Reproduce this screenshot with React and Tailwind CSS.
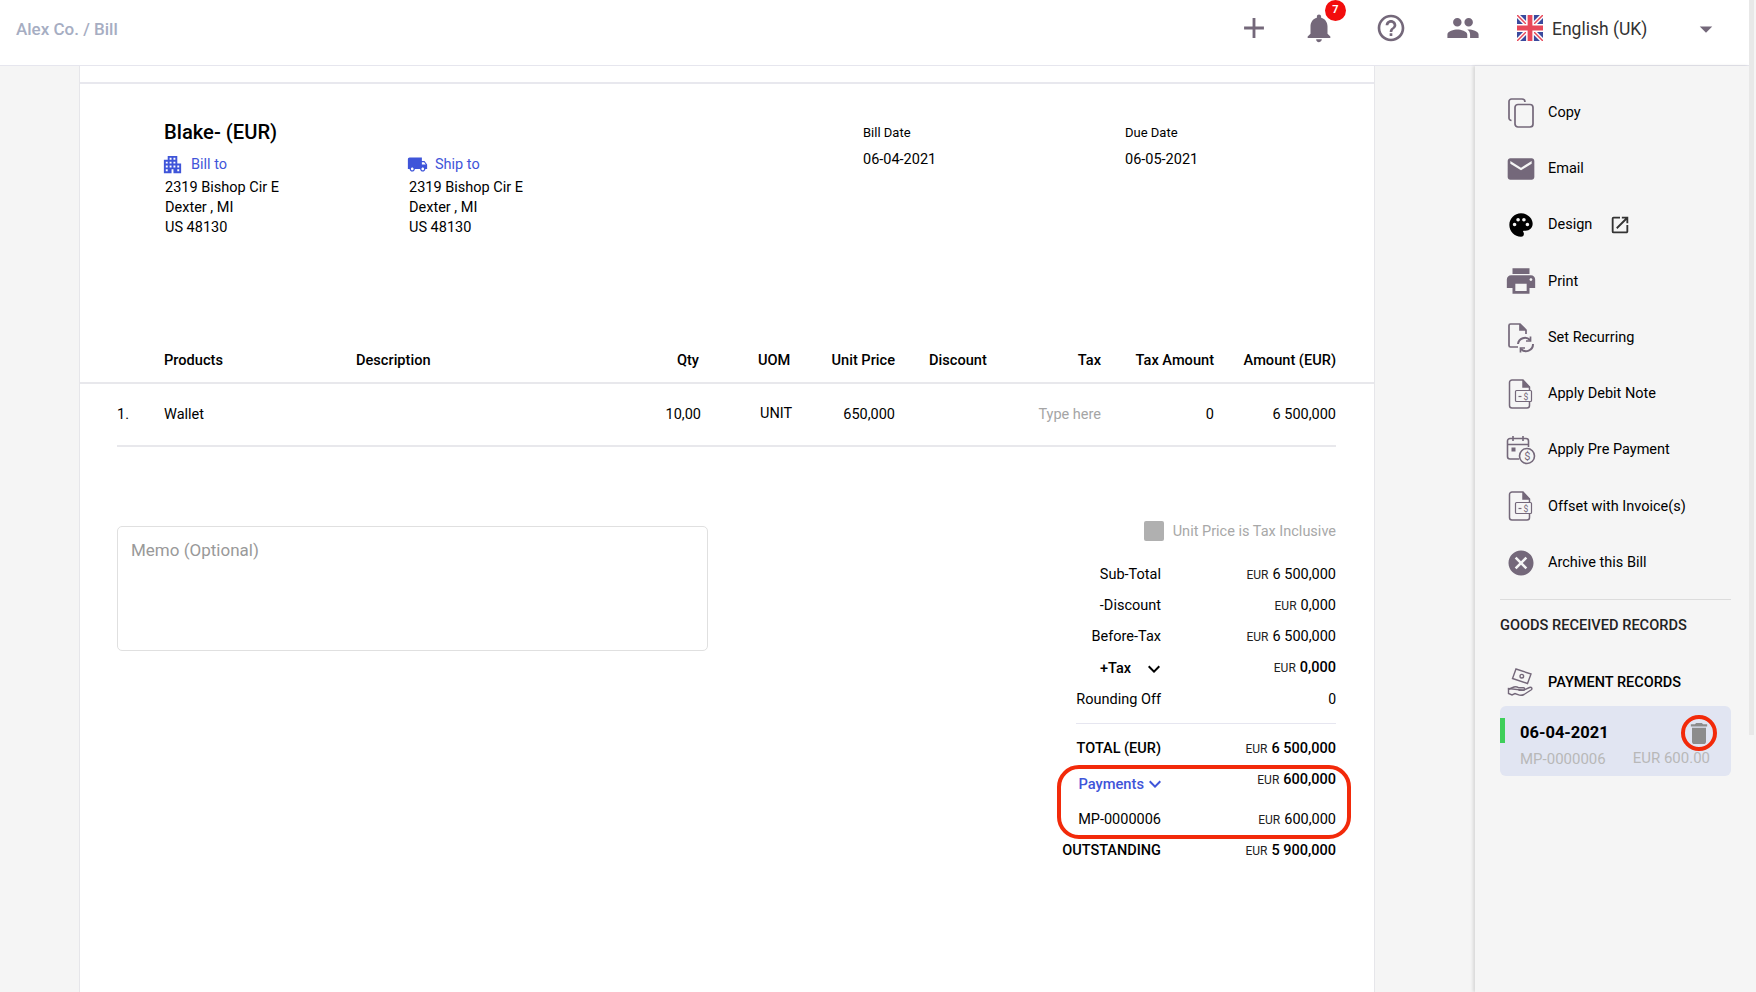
import React from "react";
import { MdAdd, MdNotifications, MdHelpOutline, MdPeople, MdEmail, MdPalette, MdOpenInNew, MdPrint, MdCancel, MdApartment, MdLocalShipping, MdDelete, MdKeyboardArrowDown, MdArrowDropDown } from "react-icons/md";

const ic = "#74687a";

function Flag() {
  return (
    <svg width="26" height="26" viewBox="0 0 60 60" className="shrink-0">
      <rect width="60" height="60" fill="#3b4a9e" />
      <path d="M0 0L60 60M60 0L0 60" stroke="#fff" strokeWidth="10" />
      <path d="M0 0L60 60M60 0L0 60" stroke="#e8485a" strokeWidth="3.5" />
      <path d="M30 0V60M0 30H60" stroke="#fff" strokeWidth="18" />
      <path d="M30 0V60M0 30H60" stroke="#e8485a" strokeWidth="11" />
    </svg>
  );
}

function CopyIc() {
  return (
    <svg width="26" height="30" viewBox="0 0 26 30" fill="none" stroke={ic} strokeWidth="1.7">
      <path d="M3.500 22.500A2.500 2.500 0 0 1 1 20V3.500A2.500 2.500 0 0 1 3.500 1H14a3 3 0 0 1 3 3" />
      <rect x="7" y="6.500" width="18" height="22.500" rx="3" />
    </svg>
  );
}

function Recurring() {
  return (
    <svg width="28" height="30" viewBox="0 0 28 30" fill="none" stroke={ic} strokeWidth="1.7">
      <path d="M11 24H3.500A1.500 1.500 0 0 1 2 22.500V2.500A1.500 1.500 0 0 1 3.500 1H13l6 6v4" />
      <path d="M13 1v6h6" fill={ic} />
      <path d="M11 21a7 7 0 0 1 12-4M26 21a7 7 0 0 1-12 5" strokeWidth="2" />
      <path d="M23.500 13.500V18H19M13.500 29.500V25H18" strokeWidth="1.700" />
    </svg>
  );
}

function NoteIc() {
  return (
    <svg width="26" height="30" viewBox="0 0 26 30" fill="none" stroke={ic} strokeWidth="1.500">
      <path d="M21.500 23V26.500A2.500 2.500 0 0 1 19 29H4A2.500 2.500 0 0 1 1.500 26.500V3.500A2.500 2.500 0 0 1 4 1H15l6.500 7v3" />
      <path d="M15 1v7h6.500" fill={ic} />
      <rect x="7.500" y="11.500" width="16" height="11" rx="1" fill="#f5f5f5" strokeWidth="1.200" />
      <path d="M10.500 17.500h3" strokeWidth="1.200" />
      <text x="15.500" y="20.500" fontSize="8.500" fill={ic} stroke="none" fontFamily="Roboto, sans-serif">$</text>
    </svg>
  );
}

function PrePay() {
  return (
    <svg width="30" height="30" viewBox="0 0 30 30" fill="none" stroke={ic} strokeWidth="1.600">
      <path d="M13 24H4a2.500 2.500 0 0 1-2.500-2.500V6A2.500 2.500 0 0 1 4 3.500h16A2.500 2.500 0 0 1 22.500 6v6" />
      <path d="M1.500 9.500h21M7 1v5M17 1v5" />
      <rect x="5.500" y="12.500" width="4" height="4" fill={ic} stroke="none" />
      <circle cx="21" cy="21" r="7.500" fill="#f5f5f5" />
      <text x="18.200" y="25" fontSize="11" fill={ic} stroke="none" fontFamily="Roboto, sans-serif">$</text>
    </svg>
  );
}

function HandMoney() {
  return (
    <svg width="28" height="30" viewBox="0 0 28 30" fill="none" stroke={ic} strokeWidth="1.400">
      <path d="M9 1l15 5-3.500 9.500-15-5z" fill="#f5f5f5" />
      <circle cx="14.800" cy="8.200" r="1.800" />
      <path d="M1 21.500l6-2.500c2-.8 3.500 0 5 .8h4.500c1.500 0 1.500 2.500 0 2.500H11.500" />
      <path d="M16.500 22.200l6-2.700c2-.8 3.300 1.200 1.500 2.500l-7 4.500c-2 1-4 1-6 .2l-3-1.200-3 1.500-3.500-1.500v-5z" />
    </svg>
  );
}

const actions = [
  [<CopyIc />, "Copy"],
  [<MdEmail size={32} color={ic} />, "Email"],
  [<MdPalette size={28} color="#000" />, "Design", true],
  [<MdPrint size={34} color={ic} />, "Print"],
  [<Recurring />, "Set Recurring"],
  [<NoteIc />, "Apply Debit Note"],
  [<PrePay />, "Apply Pre Payment"],
  [<NoteIc />, "Offset with Invoice(s)"],
  [<MdCancel size={30} color={ic} />, "Archive this Bill"],
];

function Eur({ v, bold }) {
  return (
    <span className="text-black whitespace-nowrap">
      <span className="text-[12px] mr-[4px] text-[#222]">EUR</span>
      <span className={bold ? "font-medium text-[14.5px]" : "text-[14.5px]"}>{v}</span>
    </span>
  );
}

function Row({ label, value, cls = "h-[31.3px]", labelCls = "" }) {
  return (
    <div className={`flex items-center justify-between ${cls}`}>
      <div className={`w-[99px] text-right text-[14.5px] whitespace-nowrap flex justify-end ${labelCls}`}>{label}</div>
      <div>{value}</div>
    </div>
  );
}

const gridCols = "grid grid-cols-[47px_192px_230px_113px_94px_102px_116px_90px_113px_122px] items-center";

export default function App() {
  return (
    <div className="relative h-[992px] w-[1756px] overflow-hidden bg-[#f5f5f5] font-['Roboto',sans-serif] text-[14px] text-black flex">
      <div className="flex-1 min-w-0 flex flex-col">
        <header className="h-[66px] bg-white border-b border-[#e6e6ee] flex items-center shrink-0 pb-[9px]">
          <div className="pl-[16px] text-[17px] font-medium text-[#a6adc2] w-[1237px] mt-[3px]">Alex Co. / Bill</div>
          <div className="flex items-center">
            <MdAdd size={34} color={ic} />
            <div className="relative ml-[31px]">
              <MdNotifications size={34} color={ic} />
              <span className="absolute -top-[11px] left-[23px] w-[21px] h-[21px] rounded-full bg-[#f20d0d] text-white text-[11px] font-bold flex items-center justify-center">7</span>
            </div>
            <div className="ml-[39px]"><MdHelpOutline size={32} color={ic} /></div>
            <div className="ml-[39px]"><MdPeople size={34} color={ic} /></div>
            <div className="ml-[37px]"><Flag /></div>
            <span className="ml-[9px] text-[17.5px] text-[#333] w-[143px] whitespace-nowrap mt-[2px]">English (UK)</span>
            <MdArrowDropDown size={30} color={ic} className="-ml-[4px] mt-[2px]" />
          </div>
        </header>
        <div className="flex flex-1 min-h-0">
          <div className="w-[79px] shrink-0" />
          <main className="w-[1296px] shrink-0 bg-white border-x border-[#e6e6ea]">
            <div className="h-[18px] border-b-2 border-[#e8e8ee]" />
            <section className="h-[254px] pt-[34px] pl-[84px] flex">
              <div className="w-[699px]">
                <div className="text-[20.2px] leading-[28px] font-medium">Blake- (EUR)</div>
                <div className="flex mt-[9px]">
                  <div className="w-[244px]">
                    <div className="flex items-center text-[#3f55d9] h-[20px]">
                      <MdApartment size={23} color="#3f55d9" className="-ml-[3px] -mt-[2px]" />
                      <span className="ml-[7px] text-[14.5px]">Bill to</span>
                    </div>
                    <div className="mt-[3px] pl-[1px] leading-[20px] text-[14.5px]">2319 Bishop Cir E<br />Dexter , MI<br />US 48130</div>
                  </div>
                  <div>
                    <div className="flex items-center text-[#3f55d9] h-[20px]">
                      <MdLocalShipping size={21} color="#3f55d9" className="-ml-[1px] -mt-[1px]" />
                      <span className="ml-[7px] text-[14.5px]">Ship to</span>
                    </div>
                    <div className="mt-[3px] pl-[1px] leading-[20px] text-[14.5px]">2319 Bishop Cir E<br />Dexter , MI<br />US 48130</div>
                  </div>
                </div>
              </div>
              <div className="w-[262px] pt-[7px]">
                <div className="text-[13px] leading-[16px]">Bill Date</div>
                <div className="mt-[9px] text-[14.5px] leading-[20px]">06-04-2021</div>
              </div>
              <div className="pt-[7px]">
                <div className="text-[13px] leading-[16px]">Due Date</div>
                <div className="mt-[9px] text-[14.5px] leading-[20px]">06-05-2021</div>
              </div>
            </section>
            <div className="h-[46px] border-b-2 border-[#e8e8ec] pl-[37px] pr-[38px] pt-[1px]">
              <div className={`${gridCols} h-full font-medium text-[14.6px] whitespace-nowrap`}>
                <span />
                <span>Products</span>
                <span>Description</span>
                <span className="text-right">Qty</span>
                <span className="pl-[59px]">UOM</span>
                <span className="text-right">Unit Price</span>
                <span className="pl-[34px]">Discount</span>
                <span className="text-right">Tax</span>
                <span className="text-right">Tax Amount</span>
                <span className="text-right">Amount (EUR)</span>
              </div>
            </div>
            <div className="ml-[37px] mr-[38px] h-[63px] border-b-2 border-[#e8e8ec]">
              <div className={`${gridCols} h-full text-[14.5px] whitespace-nowrap`}>
                <span>1.</span>
                <span>Wallet</span>
                <span />
                <span className="text-right -mr-[2px]">10,00</span>
                <span className="pl-[61px] -mt-[1px]">UNIT</span>
                <span className="text-right">650,000</span>
                <span />
                <span className="text-right text-[#a5a5a5]">Type here</span>
                <span className="text-right">0</span>
                <span className="text-right">6 500,000</span>
              </div>
            </div>
            <div className="flex justify-between pl-[37px] pr-[38px] pt-[74px]">
              <div className="mt-[5px] w-[591px] h-[125px] border border-[#e0e0e0] rounded-[5px] px-[13px] py-[11px] text-[17px] text-[#999]">Memo (Optional)</div>
              <div className="w-[274px]">
                <div className="flex items-center justify-end h-[20px] text-[14.5px] text-[#a8a8a8]">
                  <span className="w-[20px] h-[20px] bg-[#b0b0b0] rounded-[2px] mr-[9px]" />
                  <span className="mt-[2px]">Unit Price is Tax Inclusive</span>
                </div>
                <div className="mt-[18px]">
                  <Row label="Sub-Total" value={<Eur v="6 500,000" />} />
                  <Row label="-Discount" value={<Eur v="0,000" />} />
                  <Row label="Before-Tax" value={<Eur v="6 500,000" />} />
                  <Row label={<span className="flex items-center font-medium">+Tax<MdKeyboardArrowDown size={24} className="ml-[11px] -mr-[5px]" /></span>} value={<span className="-mt-[1px] block"><Eur v="0,000" bold /></span>} />
                  <Row label="Rounding Off" value="0" />
                </div>
                <div className="mt-[8px] ml-[14px] border-t border-[#e6e6f0]" />
                <Row label="TOTAL (EUR)" labelCls="font-medium" value={<Eur v="6 500,000" bold />} cls="h-[30px] mt-[9px]" />
                <div className="relative">
                  <div className="absolute -left-[5px] -right-[15px] top-[2px] -bottom-[6px] border-[4px] border-[#f22a0a] rounded-[22px]" />
                  <div className="flex justify-between h-[42px] pt-[8px]">
                    <div className="w-[99px] flex justify-end items-center h-[26px] text-[#3f55d9] text-[14.7px] font-medium whitespace-nowrap">Payments<MdKeyboardArrowDown size={24} className="-ml-[1px] -mr-[6px]" /></div>
                    <div className="-mt-[2px]"><Eur v="600,000" bold /></div>
                  </div>
                  <Row label="MP-0000006" value={<Eur v="600,000" />} cls="h-[28px]" />
                </div>
                <Row label="OUTSTANDING" labelCls="font-medium" value={<Eur v="5 900,000" bold />} cls="h-[28px] mt-[3px]" />
              </div>
            </div>
          </main>
          <div className="w-[100px] shrink-0" />
          <aside className="flex-1 bg-[#f5f5f5] shadow-[-2px_0_3px_rgba(0,0,0,0.12)] pt-[18.6px] pl-[25px] pr-[18px]">
            {actions.map(([icon, label, ext]) => (
              <div key={label} className="h-[56.25px] flex items-center">
                <div className="w-[42px] h-[34px] flex items-center justify-center shrink-0">{icon}</div>
                <span className="ml-[6px] text-[14.5px]">{label}</span>
                {ext && <MdOpenInNew size={22} className="ml-[17px] text-[#333]" />}
              </div>
            ))}
            <div className="mt-[8.4px] border-t border-[#dcdcdc]" />
            <div className="mt-[15px] font-medium text-[14.6px] text-[#222] leading-[20px] whitespace-nowrap">GOODS RECEIVED RECORDS</div>
            <div className="mt-[31px] h-[34px] flex items-center">
              <div className="w-[42px] flex justify-center"><HandMoney /></div>
              <span className="ml-[6px] font-medium text-[14.5px] whitespace-nowrap">PAYMENT RECORDS</span>
            </div>
            <div className="relative mt-[6px] h-[70px] rounded-[6px] bg-[#e1e5f2] pl-[20px] pr-[21px] pt-[14px]">
              <div className="absolute left-0 top-[12px] w-[5px] h-[25px] bg-[#3ecf5a]" />
              <div className="flex items-center justify-between h-[26px]">
                <span className="font-bold text-[16.5px] mt-[1px]">06-04-2021</span>
                <span className="relative w-[36px] h-[36px] rounded-full border-[4px] border-[#f22a0a] flex items-center justify-center shrink-0 -mr-[7px]">
                  <MdDelete size={29} color="#8c8c8c" />
                </span>
              </div>
              <div className="flex justify-between items-center text-[15px] text-[#b8b8b8] mt-[2px]">
                <span>MP-0000006</span>
                <span className="-mt-[2px] whitespace-nowrap">EUR 600.00</span>
              </div>
            </div>
          </aside>
        </div>
      </div>
      <div className="w-[7px] shrink-0 bg-[#f5f5f5]">
        <div className="h-[735px] w-[5px] bg-[#e8e8e8]" />
      </div>
    </div>
  );
}
